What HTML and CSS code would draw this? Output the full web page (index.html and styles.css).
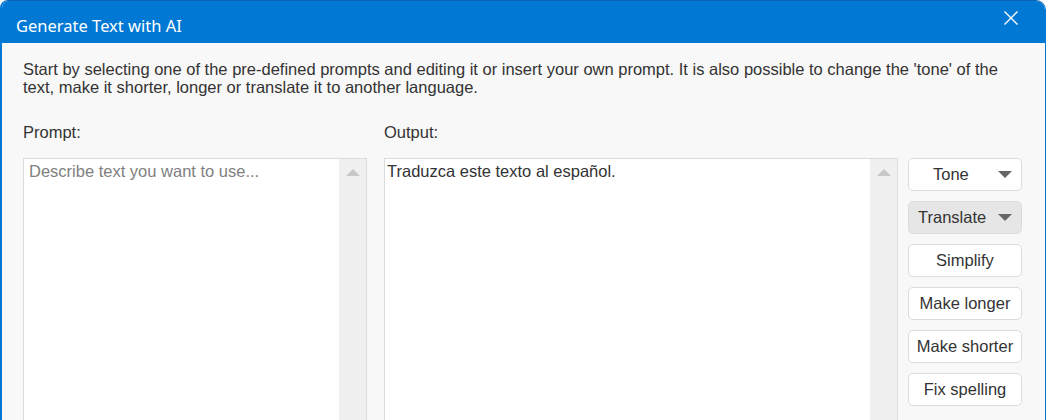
FILE: index.html
```html
<!DOCTYPE html>
<html lang="en">
<head>
    <meta charset="UTF-8">
    <title>Generate Text with AI</title>
    <link rel="stylesheet" href="styles.css">
</head>
<body>
    <div class="dialog">
        <div class="dialog-header">
            <span class="dialog-title">Generate Text with AI</span>
            <svg class="close" width="16" height="16" viewBox="0 0 16 16">
                <path d="M1.5 1.5 L14.5 14.5 M14.5 1.5 L1.5 14.5" stroke="#fff" stroke-width="1.4" fill="none"/>
            </svg>
        </div>
        <div class="dialog-body">
            <p class="intro">Start by selecting one of the pre-defined prompts and editing it or insert your own prompt. It is also possible to change the 'tone' of the text, make it shorter, longer or translate it to another language.</p>
            <div class="columns">
                <div class="label">Prompt:</div>
                <div class="label">Output:</div>
                <div></div>

                <div class="field">
                    <textarea class="field-text prompt-text" placeholder="Describe text you want to use..."></textarea>
                    <div class="scrollbar"><span class="arrow-up"></span></div>
                </div>
                <div class="field">
                    <textarea class="field-text">Traduzca este texto al español.</textarea>
                    <div class="scrollbar"><span class="arrow-up"></span></div>
                </div>
                <div class="actions">
                    <button class="btn btn-drop">Tone <span class="caret"></span></button>
                    <button class="btn btn-drop active">Translate <span class="caret"></span></button>
                    <button class="btn">Simplify</button>
                    <button class="btn">Make longer</button>
                    <button class="btn">Make shorter</button>
                    <button class="btn">Fix spelling</button>
                </div>
            </div>
        </div>
    </div>
</body>
</html>
```

FILE: styles.css
```css
body {
    margin: 0;
    padding: 0;
    background: #ffffff;
    font-family: 'Liberation Sans', Arial, sans-serif;
    color: #333;
    overflow: hidden;
}

.dialog {
    width: 1043px;
    height: 440px;
    border-top: 1px solid #0a64b4;
    border-left: 2px solid #0078d4;
    border-right: 1px solid #0078d4;
    border-radius: 8px 10px 0 0;
    background: #f8f8f8;
    overflow: hidden;
}

.dialog-header {
    height: 42px;
    background: #0078d4;
    display: flex;
    align-items: flex-start;
    justify-content: space-between;
    padding: 0 26px 0 14px;
    box-sizing: border-box;
}

.dialog-title {
    color: #fff;
    font-family: 'Noto Sans', 'Open Sans', sans-serif;
    font-size: 16.5px;
    line-height: 22px;
    margin-top: 14px;
}

.close {
    margin-top: 9px;
}

.dialog-body {
    padding: 17px 0 0 21px;
}

.intro {
    margin: 0;
    font-size: 16.5px;
    line-height: 18px;
    width: 990px;
}

.columns {
    display: grid;
    grid-template-columns: 344px 514px 114px;
    column-gap: 17px;
    margin-top: 27px;
}

.columns > :nth-child(3n) {
    margin-left: -7px;
}

.label {
    font-size: 16.5px;
    height: 35px;
}

.field {
    display: flex;
    height: 300px;
    border: 1px solid #dcdcdc;
    background: #fff;
}

.field-text {
    flex: 1;
    border: none;
    outline: none;
    resize: none;
    padding: 3px 2px;
    margin: 0;
    font-family: 'Liberation Sans', Arial, sans-serif;
    font-size: 16.5px;
    color: #333;
    background: transparent;
}

.prompt-text {
    padding-left: 5px;
}

.field-text::placeholder {
    color: #808080;
}

.scrollbar {
    width: 27px;
    background: #f0f0f0;
    display: flex;
    justify-content: center;
    padding-top: 10px;
    box-sizing: border-box;
}

.arrow-up {
    width: 0;
    height: 0;
    border-left: 7px solid transparent;
    border-right: 7px solid transparent;
    border-bottom: 7px solid #c8c8c8;
}

.actions {
    display: flex;
    flex-direction: column;
    gap: 10px;
    width: 114px;
}

.btn {
    height: 33px;
    background: #fff;
    border: 1px solid #dcdcdc;
    border-radius: 5px;
    font-family: 'Liberation Sans', Arial, sans-serif;
    font-size: 16.5px;
    color: #333;
    padding: 0;
    display: flex;
    align-items: center;
    justify-content: center;
}

.btn-drop {
    justify-content: space-between;
    padding: 0 9px 0 24px;
}

.btn-drop.active {
    padding-left: 9px;
}

.active {
    background: #e6e6e6;
}

.caret {
    width: 0;
    height: 0;
    border-left: 7px solid transparent;
    border-right: 7px solid transparent;
    border-top: 7px solid #666;
}
```
